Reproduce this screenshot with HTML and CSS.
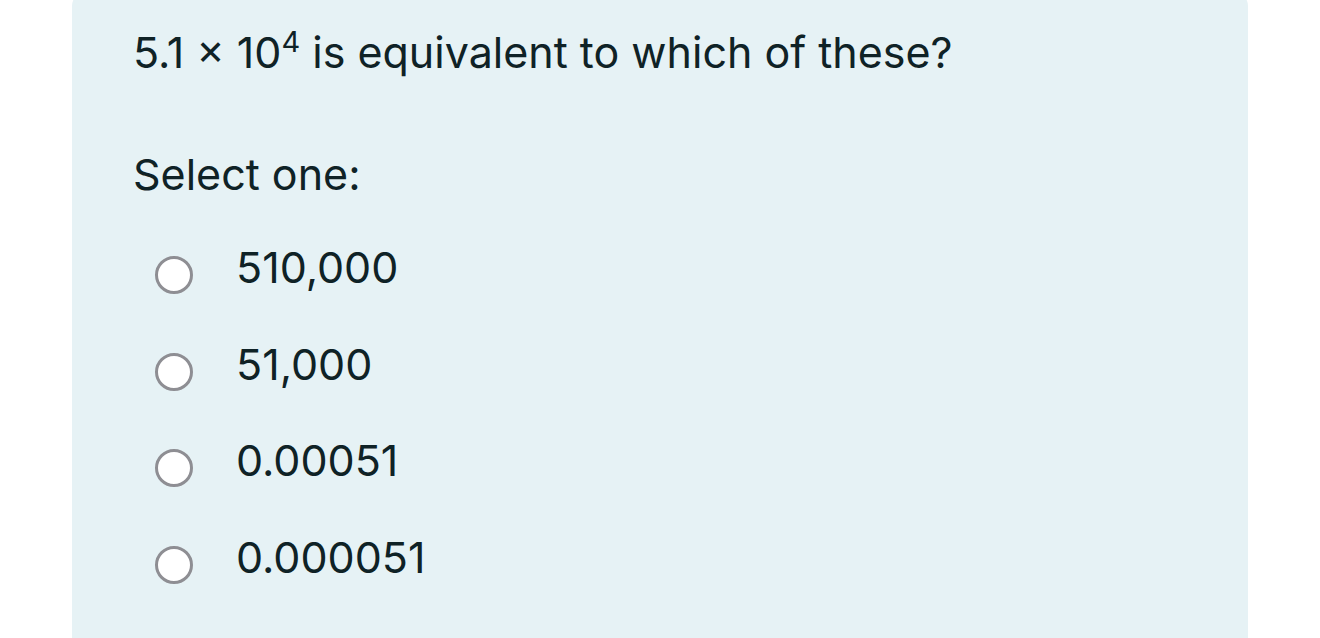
FILE: index.html
```html
<!DOCTYPE html>
<html>
<head>
<meta charset="utf-8">
<link rel="stylesheet" href="styles.css">
</head>
<body>
<div class="panel">
  <p class="question">5.1 × 10<sup>4</sup> is equivalent to which of these?</p>
  <p class="prompt">Select one:</p>
  <div class="options">
    <label class="option"><span class="radio"></span><span class="label">510,000</span></label>
    <label class="option"><span class="radio"></span><span class="label">51,000</span></label>
    <label class="option"><span class="radio"></span><span class="label">0.00051</span></label>
    <label class="option"><span class="radio"></span><span class="label">0.000051</span></label>
  </div>
</div>
</body>
</html>
```
FILE: styles.css
```css
html, body {
  margin: 0;
  padding: 0;
  background: #ffffff;
  height: 638px;
  overflow: hidden;
}
body {
  font-family: Inter, "Liberation Sans", sans-serif;
  color: #0f2226;
}
.panel {
  margin: -8px 72px 0 72px;
  height: 660px;
  background: #e6f2f5;
  border-radius: 14px;
  padding: 0 61px;
  box-sizing: border-box;
}
.question {
  margin: 0;
  padding-top: 30px;
  font-size: 43px;
  line-height: 60px;
}
.question sup {
  font-size: 29px;
  line-height: 0;
  vertical-align: 0.55em;
}
.prompt {
  margin: 62px 0 0 0;
  font-size: 43px;
  line-height: 60px;
}
.options {
  margin-top: 33px;
  display: flex;
  flex-direction: column;
  gap: 36.5px;
  padding-left: 22px;
}
.option {
  display: flex;
  align-items: center;
  height: 60px;
  font-size: 43px;
}
.radio {
  width: 32px;
  height: 32px;
  border: 3.5px solid #8e8e93;
  border-radius: 50%;
  background: #ffffff;
  margin-right: 43px;
  margin-top: 16px;
  flex: none;
}
```
